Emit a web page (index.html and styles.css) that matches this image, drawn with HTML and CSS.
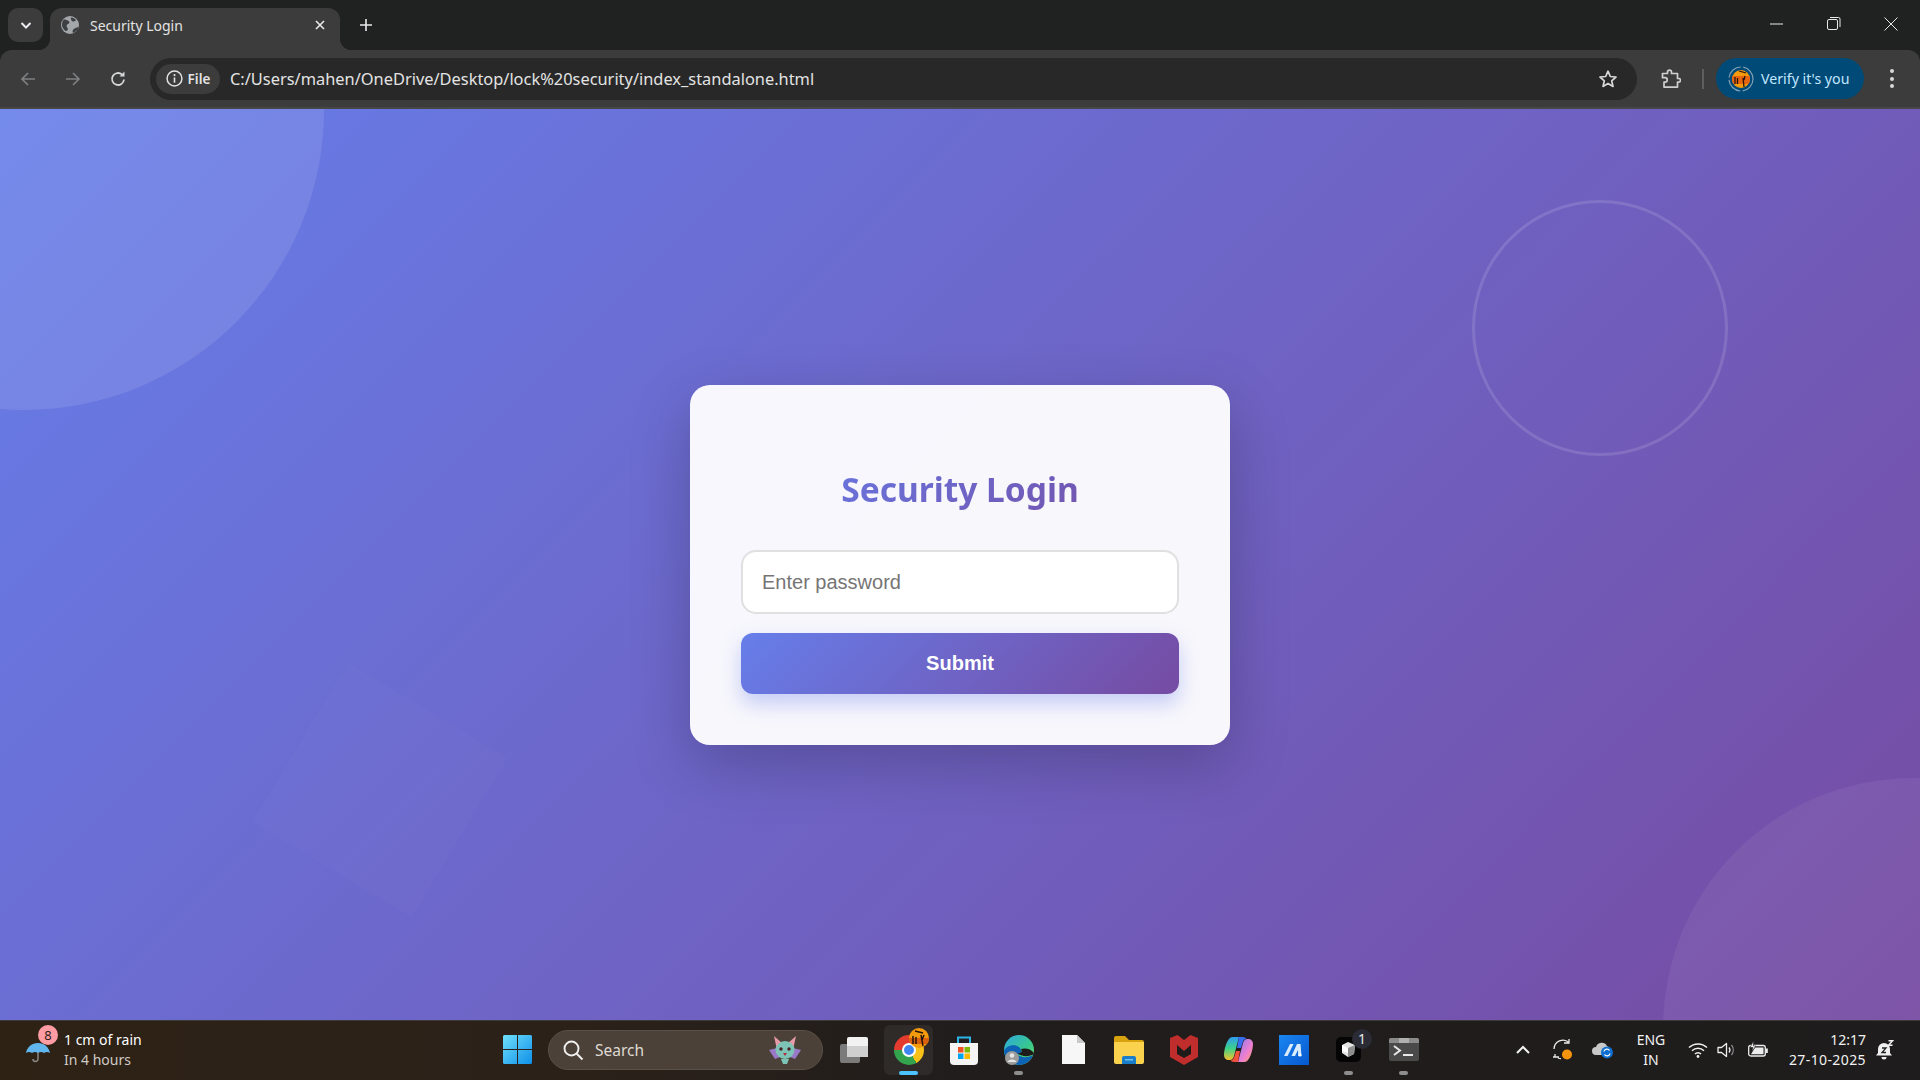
FILE: index.html
```html
<!DOCTYPE html>
<html lang="en">
<head>
    <meta charset="UTF-8">
    <meta name="viewport" content="width=device-width, initial-scale=1.0">
    <title>Security Login</title>
    <link rel="stylesheet" href="styles.css">
</head>
<body>
    <div class="tabstrip">
        <div class="tab-search">
            <svg width="14" height="14" viewBox="0 0 14 14"><path d="M2.5 5l4.500 4.500L11.500 5" fill="none" stroke="#e8eaed" stroke-width="2"/></svg>
        </div>
        <div class="tab">
            <svg width="18" height="18" viewBox="0 0 18 18"><circle cx="9" cy="9" r="9" fill="#a3a7aa"/><path d="M3 3.500c2 0 3 .5 4.500 1.500s1 2.500-.5 3S5 10 6.500 12 5 15.500 4.500 15 1 12 1 9s1-4.500 2-5.500zM12 17c-1-2 0-4 1.500-4.500s3-1.500 4-1C17 14 15 16 12 17zM10 1.500c2 0 4 1 5 2.500-1 1.500-3 2-4 1s-1.500-2.500-1-3.500z" fill="#3d4043"/></svg>
            <span class="tab-title">Security Login</span>
            <svg class="tab-close" width="12" height="12" viewBox="0 0 12 12"><path d="M2 2l8 8M10 2l-8 8" stroke="#e8eaed" stroke-width="1.600"/></svg>
        </div>
        <div class="new-tab">
            <svg width="14" height="14" viewBox="0 0 14 14"><path d="M7 1v12M1 7h12" stroke="#e8eaed" stroke-width="1.600"/></svg>
        </div>
        <div class="window-controls">
            <div class="win-btn"><svg width="14" height="14" viewBox="0 0 14 14"><path d="M0 7h13" stroke="#e8e8e8" stroke-width="1"/></svg></div>
            <div class="win-btn"><svg width="14" height="14" viewBox="0 0 14 14"><rect x=".5" y="2.500" width="10" height="10" rx="1.500" fill="none" stroke="#e8e8e8"/><path d="M3 .5h8.500a1.500 1.500 0 0 1 1.500 1.500v8" fill="none" stroke="#e8e8e8"/></svg></div>
            <div class="win-btn"><svg width="14" height="14" viewBox="0 0 14 14"><path d="M.5.5l13 13M13.500.5l-13 13" stroke="#e8e8e8" stroke-width="1"/></svg></div>
        </div>
    </div>

    <div class="toolbar">
        <div class="nav-btn"><svg width="18" height="18" viewBox="0 0 18 18"><path d="M16 9H3M9 3L3 9l6 6" fill="none" stroke="#7d7f80" stroke-width="1.700"/></svg></div>
        <div class="nav-btn"><svg width="18" height="18" viewBox="0 0 18 18"><path d="M2 9h13M9 3l6 6-6 6" fill="none" stroke="#7d7f80" stroke-width="1.700"/></svg></div>
        <div class="nav-btn"><svg width="18" height="18" viewBox="0 0 18 18"><path d="M15 9.500A6 6 0 1 1 13 4.500" fill="none" stroke="#d5d7d9" stroke-width="1.800"/><path d="M15.500 1.500v5h-5z" fill="#d5d7d9"/></svg></div>
        <div class="omnibox">
            <div class="chip">
                <svg width="17" height="17" viewBox="0 0 16 16"><circle cx="8" cy="8" r="7" fill="none" stroke="#e3e3e3" stroke-width="1.400"/><path d="M8 7v5" stroke="#e3e3e3" stroke-width="1.500"/><circle cx="8" cy="4.800" r="1" fill="#e3e3e3"/></svg>
                <span>File</span>
            </div>
            <span class="url">C:/Users/mahen/OneDrive/Desktop/lock%20security/index_standalone.html</span>
            <svg class="star" width="20" height="20" viewBox="0 0 20 20"><path d="M10 2.200l2.300 5.300 5.700.5-4.300 3.800 1.300 5.600L10 14.500l-5 2.900 1.300-5.600L2 8l5.700-.5z" fill="none" stroke="#d8d8d8" stroke-width="1.700" stroke-linejoin="round"/></svg>
        </div>
        <div class="ext-btn">
            <svg width="20" height="20" viewBox="0 0 20 20"><path d="M1.500 4.500h5V3.200a2 2 0 0 1 4 0v1.300h6v5h1.200a1.800 1.800 0 0 1 0 3.600h-1.200v5H3v-5h1a2.200 2.200 0 0 0 0-4.400H1.500z" fill="none" stroke="#cfcfcf" stroke-width="1.700" stroke-linejoin="round"/></svg>
        </div>
        <div class="toolbar-divider"></div>
        <div class="verify-pill">
            <svg width="26" height="26" viewBox="0 0 26 26">
                <circle cx="13" cy="13" r="12" fill="none" stroke="#7fa0b5" stroke-width="1.200" stroke-dasharray="17 2.500"/>
                <circle cx="13" cy="13" r="9" fill="#f59a0c"/>
                <path d="M4.500 10h17a9 9 0 0 1-1 8h-15a9 9 0 0 1-1-8z" fill="#e8650f"/>
                <path d="M7 11v7M9.500 12v6M15 12l1 9M17 10l-1 4M11 5l7 2" stroke="#26140c" stroke-width="1.300" fill="none"/>
            </svg>
            <span>Verify it's you</span>
        </div>
        <div class="menu-dots"><span></span><span></span><span></span></div>
    </div>

    <main class="page">
        <div class="shape shape-circle-big"></div>
        <div class="shape shape-ring"></div>
        <div class="shape shape-square"></div>
        <div class="shape shape-circle-corner"></div>

        <div class="card">
            <h1 class="card-title">Security Login</h1>
            <input class="password-input" type="password" placeholder="Enter password">
            <button class="submit-btn">Submit</button>
        </div>
    </main>

    <footer class="taskbar">
        <div class="weather">
            <div class="weather-icon">
                <svg width="26" height="24" viewBox="0 0 26 24"><path d="M13 3v15a2.500 2.500 0 0 1-5 0" fill="none" stroke="#8a8a88" stroke-width="1.500"/><path d="M1 12C2 6 7 2 13 2s11 4 12 10c-2-1.500-4-1.500-6 0-2-1.500-4-1.500-6 0-2-1.500-4-1.500-6 0-2-1.500-4-1.500-6 0z" fill="#62b6ee"/></svg>
                <span class="weather-badge">8</span>
            </div>
            <div class="weather-text">
                <div class="weather-main">1 cm of rain</div>
                <div class="weather-sub">In 4 hours</div>
            </div>
        </div>

        <div class="win-logo">
            <svg width="29" height="29" viewBox="0 0 29 29">
                <defs><linearGradient id="winblue" x1="0" y1="0" x2="1" y2="1"><stop offset="0" stop-color="#6fe0fb"/><stop offset="1" stop-color="#0f8fe8"/></linearGradient></defs>
                <path d="M0 1.500A1.500 1.500 0 0 1 1.500 0H14v14H0zM15 0h12.500A1.500 1.500 0 0 1 29 1.500V14H15zM0 15h14v14H1.500A1.500 1.500 0 0 1 0 27.500zM15 15h14v12.500a1.500 1.500 0 0 1-1.500 1.500H15z" fill="url(#winblue)"/>
            </svg>
        </div>

        <div class="search-box">
            <svg width="22" height="22" viewBox="0 0 22 22"><circle cx="9.500" cy="9.500" r="7" fill="none" stroke="#efefef" stroke-width="1.900"/><path d="M14.500 14.500l6 6" stroke="#efefef" stroke-width="2"/></svg>
            <span>Search</span>
            <svg class="search-mascot" width="34" height="30" viewBox="0 0 34 30">
                <path d="M1 15l8-2 3 9-5 2zM33 15l-8-2-3 9 5 2z" fill="#9a78c8"/>
                <path d="M6 1l9 8-6 6zM28 1l-9 8 6 6z" fill="#e99aa8"/>
                <ellipse cx="17" cy="15" rx="9.500" ry="9" fill="#7ec4b6"/>
                <path d="M13 24h8l-2 5h-4z" fill="#7ec4b6"/>
                <circle cx="13" cy="14" r="1.700" fill="#4a1f22"/><circle cx="21" cy="14" r="1.700" fill="#4a1f22"/>
                <path d="M15 18h4l-2 3z" fill="#b0303a"/>
            </svg>
        </div>

        <div class="task-icons">
            <div class="task-item">
                <svg width="28" height="26" viewBox="0 0 28 26"><rect x="0" y="7" width="20" height="19" rx="2" fill="#7b7b7b"/><rect x="7" y="0" width="21" height="20" rx="2" fill="#f2f2f2"/><rect x="7" y="9" width="21" height="11" fill="#cfcfcf"/></svg>
            </div>
            <div class="task-item task-active">
                <div class="chrome-logo"><div class="chrome-dot"></div></div>
                <svg class="chrome-avatar" width="20" height="20" viewBox="0 0 20 20"><circle cx="10" cy="10" r="10" fill="#f39a0d"/><path d="M0 10h20a10 10 0 0 1-2 6H2a10 10 0 0 1-2-6z" fill="#d9600f"/><path d="M4 8v8M7 9v7M12 7l2 11M15 7l-2 5M6 3l8 2" stroke="#26140c" stroke-width="1.500" fill="none"/></svg>
                <span class="task-bar"></span>
            </div>
            <div class="task-item">
                <svg width="30" height="30" viewBox="0 0 30 30">
                    <path d="M9 8V2.500h12V8" fill="none" stroke="#2cb3ea" stroke-width="2"/>
                    <path d="M1 8h28v18a4 4 0 0 1-4 4H5a4 4 0 0 1-4-4z" fill="#f4f4f4"/>
                    <rect x="9" y="12" width="5.500" height="5.500" fill="#f05022"/><rect x="15.500" y="12" width="5.500" height="5.500" fill="#7eb900"/>
                    <rect x="9" y="18.500" width="5.500" height="5.500" fill="#00a3ee"/><rect x="15.500" y="18.500" width="5.500" height="5.500" fill="#fdb800"/>
                </svg>
            </div>
            <div class="task-item">
                <svg width="32" height="32" viewBox="0 0 32 32">
                    <defs><linearGradient id="edge" x1="0" y1="0" x2="1" y2="1"><stop offset="0" stop-color="#2fa8e0"/><stop offset=".6" stop-color="#38c98c"/><stop offset="1" stop-color="#7fdc63"/></linearGradient></defs>
                    <circle cx="16" cy="16" r="15" fill="url(#edge)"/>
                    <path d="M1 17c3-7 14-8 17-1 1 3-2 5-5 4 5 4 12 4 17 1-2 6-8 10-14 10S2 25 1 17z" fill="#0c62b5"/>
                    <path d="M18 15c3-1 9-1 12 3l1 2c-5 3-12 3-17-1 3 1 6-1 4-4z" fill="#1e1b1b"/>
                    <circle cx="9" cy="24" r="7" fill="#9b9b9b"/><circle cx="9" cy="21.500" r="2.300" fill="#e6e6e6"/><path d="M4.500 28c1-3.500 8-3.500 9 0z" fill="#e6e6e6"/>
                </svg>
                <span class="task-dot"></span>
            </div>
            <div class="task-item">
                <svg width="23" height="29" viewBox="0 0 23 29"><path d="M0 0h15l8 8v21H0z" fill="#f7f7f7"/><path d="M15 0v8h8z" fill="#c9c9c9"/></svg>
            </div>
            <div class="task-item">
                <svg width="30" height="28" viewBox="0 0 30 28"><path d="M0 2a2 2 0 0 1 2-2h9l4 4h13a2 2 0 0 1 2 2v3H0z" fill="#d9a20f"/><path d="M0 6h30v20a2 2 0 0 1-2 2H2a2 2 0 0 1-2-2z" fill="#fbd24e"/><path d="M8 22a2 2 0 0 1 2-2h10a2 2 0 0 1 2 2v6H8z" fill="#1a7dc8"/><rect x="11" y="23" width="8" height="1.500" fill="#6cc0f0"/></svg>
            </div>
            <div class="task-item">
                <svg width="28" height="30" viewBox="0 0 28 30"><path d="M0 3l7.500-3L14 5l6.500-5L28 3v19l-14 8-14-8z" fill="#bf2e2c"/><path d="M7 10l7 6 7-6v9l-7 4-7-4z" fill="#1e1b1b"/></svg>
            </div>
            <div class="task-item">
                <svg width="29" height="27" viewBox="0 0 29 27">
                    <defs>
                        <linearGradient id="copA" x1="0" y1="0" x2="0" y2="1"><stop offset="0" stop-color="#2f9bf0"/><stop offset=".5" stop-color="#3dd28a"/><stop offset="1" stop-color="#f6c32c"/></linearGradient>
                        <linearGradient id="copB" x1="0" y1="0" x2="1" y2="1"><stop offset="0" stop-color="#8a7cf0"/><stop offset=".6" stop-color="#ee7fd0"/><stop offset="1" stop-color="#f7a05a"/></linearGradient>
                    </defs>
                    <path d="M9 1h6l-5 19c-.5 2-2 4-4 4H5c-3 0-5-2-5-5 0-6 3-14 5-16 1-1.500 2.500-2 4-2z" fill="url(#copA)"/>
                    <path d="M20 26h-6l5-19c.5-2 2-4 4-4h1c3 0 5 2 5 5 0 6-3 14-5 16-1 1.500-2.500 2-4 2z" fill="url(#copB)"/>
                    <path d="M15 1h4c2 0 3 1 3 2-2 0-3 2-3.500 4L17 12h-4z" fill="#3a6df0"/>
                    <path d="M14 26h-4c-2 0-3-1-3-2 2 0 3-2 3.500-4L12 15h4z" fill="#f0503c"/>
                </svg>
            </div>
            <div class="task-item">
                <svg width="30" height="30" viewBox="0 0 30 30">
                    <defs><linearGradient id="blueapp" x1="0" y1="0" x2="1" y2="1"><stop offset="0" stop-color="#1a86f0"/><stop offset="1" stop-color="#0658cf"/></linearGradient></defs>
                    <rect width="30" height="30" fill="url(#blueapp)"/>
                    <path d="M11 9h3.500L8.500 21H5zM18 9h3.500l1 12H19.200l-.2-6-3 6h-3.500z" fill="#d9ecff"/>
                    <circle cx="21" cy="20" r="1.500" fill="#fff"/>
                </svg>
            </div>
            <div class="task-item">
                <svg width="25" height="25" viewBox="0 0 25 25"><rect width="25" height="25" rx="5" fill="#050505"/><path d="M12 5l7 3-1 9-6 3-6-4V8z" fill="#e5e5e5"/><path d="M12 11l7-3-1 9-6 3z" fill="#8d8d8d"/><path d="M6 8l6 3v5l-6-2z" fill="#fff"/></svg>
                <span class="task-count">1</span>
                <span class="task-dot"></span>
            </div>
            <div class="task-item">
                <svg width="30" height="23" viewBox="0 0 30 23"><rect width="30" height="23" rx="2" fill="#4a4a4a"/><path d="M0 2a2 2 0 0 1 2-2h26a2 2 0 0 1 2 2v3H0z" fill="#8b8b8b"/><rect x="10" y="0" width="10" height="5" fill="#b0b0b0"/><path d="M5 8l6 4.500L5 17" fill="none" stroke="#e8e8e8" stroke-width="2"/><path d="M14 17h10" stroke="#e8e8e8" stroke-width="2"/></svg>
                <span class="task-dot"></span>
            </div>
        </div>

        <div class="tray">
            <div class="tray-item tray-chevron"><svg width="14" height="9" viewBox="0 0 14 9"><path d="M1 8l6-6 6 6" fill="none" stroke="#f2f2f2" stroke-width="2"/></svg></div>
            <div class="tray-item tray-sync"><svg width="22" height="24" viewBox="0 0 22 24"><path d="M2 11a9 9 0 0 1 15-6.500M1 19h6M17 1v4h-5M3 16v3.500M6 20c1 .5 2 .7 3 .7" fill="none" stroke="#eaeaea" stroke-width="1.300"/><circle cx="15" cy="16.500" r="5" fill="#f7940e"/></svg></div>
            <div class="tray-item tray-cloud"><svg width="22" height="18" viewBox="0 0 22 18"><path d="M4 14a4 4 0 0 1 0-8 6 6 0 0 1 11-1 4 4 0 0 1 3 5v4z" fill="#c8c8c8"/><circle cx="15" cy="11.500" r="6" fill="#0f6fd1"/><path d="M12 10.500a3 3 0 0 1 5.500-1M18 12.500a3 3 0 0 1-5.500 1" fill="none" stroke="#fff" stroke-width="1.300"/></svg></div>
            <div class="tray-item tray-lang"><span>ENG</span><span>IN</span></div>
            <div class="tray-item tray-wifi"><svg width="20" height="16" viewBox="0 0 20 16"><path d="M1 5.500a13 13 0 0 1 18 0M4 8.800a8.500 8.500 0 0 1 12 0M7 12a4 4 0 0 1 6 0" fill="none" stroke="#f0f0f0" stroke-width="1.500"/><circle cx="10" cy="14.500" r="1.400" fill="#f0f0f0"/></svg></div>
            <div class="tray-item tray-volume"><svg width="20" height="18" viewBox="0 0 20 18"><path d="M1 6.500h3.500L9.500 2.500v13l-5-4H1z" fill="none" stroke="#ededed" stroke-width="1.300" stroke-linejoin="round"/><path d="M12 6.500a4 4 0 0 1 0 5" fill="none" stroke="#ededed" stroke-width="1.300"/><path d="M14.500 4a8 8 0 0 1 0 10" fill="none" stroke="#8a8a8a" stroke-width="1.300"/></svg></div>
            <div class="tray-item tray-battery"><svg width="20" height="17" viewBox="0 0 20 17"><rect x=".7" y="4.500" width="16.600" height="10.500" rx="2" fill="none" stroke="#ededed" stroke-width="1.300"/><rect x="18" y="7.500" width="1.800" height="4.500" fill="#ededed"/><path d="M7 6.500h8.500v6.800H3z" fill="#ededed"/><path d="M5.500 0L2 6.500h3L3.500 11 8 5H5.500z" fill="#ededed" stroke="#1e1c1c" stroke-width=".6"/></svg></div>
            <div class="tray-item tray-clock"><span>12:17</span><span class="clock-date">27-10-2025</span></div>
            <div class="tray-item tray-bell"><svg width="18" height="20" viewBox="0 0 18 20"><path d="M8 3a6 6 0 0 1 6 6v4l2 2.500H0L2 13V9a6 6 0 0 1 6-6z" fill="#f0f0f0"/><path d="M5.500 17h5a2.500 2.500 0 0 1-5 0z" fill="#f0f0f0"/><path d="M6 8h4l-4 4.500h4" fill="none" stroke="#222" stroke-width="1.300"/><path d="M12.500 .8h4l-4 4.500h4" fill="none" stroke="#f0f0f0" stroke-width="1.400"/></svg></div>
        </div>
    </footer>
</body>
</html>
```

FILE: styles.css
```css
* {
    box-sizing: border-box;
}

body {
    margin: 0;
    height: 100vh;
    display: flex;
    flex-direction: column;
    overflow: hidden;
    background-color: #202221;
    font-family: "Noto Sans", "Open Sans", sans-serif;
}

/* browser tabs */
.tabstrip {
    height: 50px;
    flex: none;
    display: flex;
    align-items: flex-start;
    padding: 8px 1px 0 8px;
    background-color: #202221;
}

.tab-search {
    width: 35px;
    height: 34px;
    display: flex;
    align-items: center;
    justify-content: center;
    background-color: #3c3c3c;
    border-radius: 10px;
}

.tab {
    position: relative;
    width: 290px;
    height: 42px;
    margin-left: 7px;
    padding: 0 14px 8px 11px;
    display: flex;
    align-items: center;
    gap: 11px;
    background-color: #3c3c3c;
    border-radius: 12px 12px 0 0;
}

.tab::before,
.tab::after {
    content: "";
    position: absolute;
    bottom: 0;
    width: 12px;
    height: 12px;
}

.tab::before {
    left: -12px;
    background: radial-gradient(circle at 0 0, transparent 12px, #3c3c3c 12.5px);
}

.tab::after {
    right: -12px;
    background: radial-gradient(circle at 100% 0, transparent 12px, #3c3c3c 12.5px);
}

.tab-title {
    color: #e3e3e3;
    font-size: 14px;
}

.tab-close {
    margin-left: auto;
}

.new-tab {
    margin-left: 19px;
    height: 34px;
    display: flex;
    align-items: center;
}

.window-controls {
    margin-left: auto;
    display: flex;
    margin-top: -4px;
}

.win-btn {
    width: 57px;
    height: 40px;
    display: flex;
    align-items: center;
    justify-content: center;
}

/* address bar row */
.toolbar {
    height: 59px;
    flex: none;
    display: flex;
    align-items: center;
    padding: 0 0 0 5px;
    background-color: #3c3c3c;
    border-bottom: 2px solid #474747;
    border-radius: 12px 12px 0 0;
}

.nav-btn {
    width: 45px;
    display: flex;
    justify-content: center;
}

.omnibox {
    width: 1487px;
    height: 42px;
    margin-left: 10px;
    padding: 0 19px 0 6px;
    display: flex;
    align-items: center;
    background-color: #282828;
    border-radius: 21px;
}

.chip {
    height: 30px;
    width: 64px;
    display: flex;
    align-items: center;
    justify-content: center;
    gap: 5px;
    color: #e3e3e3;
    font-size: 13.5px;
    font-weight: 600;
    background-color: #3c3c3c;
    border-radius: 15px;
}

.url {
    margin-left: 10px;
    color: #e3e3e3;
    font-size: 16.4px;
}

.star {
    margin-left: auto;
}

.ext-btn {
    margin-left: 24px;
    width: 20px;
    height: 20px;
}

.toolbar-divider {
    width: 2px;
    height: 20px;
    margin-left: 21px;
    background-color: #5f5f5f;
}

.verify-pill {
    width: 148px;
    height: 41px;
    margin-left: 12px;
    padding-left: 12px;
    display: flex;
    align-items: center;
    gap: 7px;
    color: #c2e7ff;
    font-size: 14.2px;
    white-space: nowrap;
    background-color: #004a77;
    border-radius: 21px;
}

.menu-dots {
    margin-left: 26px;
    display: flex;
    flex-direction: column;
    gap: 3.5px;
}

.menu-dots span {
    width: 4px;
    height: 4px;
    border-radius: 50%;
    background-color: #d8d8d8;
}

/* page content */
.page {
    position: relative;
    flex: 1;
    padding-top: 1px;
    display: flex;
    align-items: center;
    justify-content: center;
    overflow: hidden;
    background: linear-gradient(135deg, #667eea 0%, #764ba2 100%);
}

.shape {
    position: absolute;
}

.shape-circle-big {
    width: 600px;
    height: 600px;
    left: -276px;
    top: -299px;
    border-radius: 50%;
    background-color: rgba(255, 255, 255, 0.1);
}

.shape-ring {
    width: 256px;
    height: 256px;
    left: 1472px;
    top: 91px;
    border: 3px solid rgba(255, 255, 255, 0.13);
    border-radius: 50%;
}

.shape-square {
    width: 186px;
    height: 186px;
    left: 287px;
    top: 588px;
    transform: rotate(31deg);
    background-color: rgba(255, 255, 255, 0.015);
}

.shape-circle-corner {
    width: 500px;
    height: 500px;
    left: 1663px;
    top: 669px;
    border-radius: 50%;
    background-color: rgba(255, 255, 255, 0.06);
}

.card {
    position: relative;
    width: 540px;
    padding: 81px 51px 51px;
    display: flex;
    flex-direction: column;
    background-color: rgba(255, 255, 255, 0.95);
    border-radius: 20px;
    box-shadow: 0 20px 60px rgba(0, 0, 0, 0.22);
}

.card-title {
    margin: 0 0 37px;
    height: 47px;
    line-height: 47px;
    text-align: center;
    font-size: 33.5px;
    font-weight: 700;
    background: linear-gradient(135deg, #667eea, #764ba2);
    -webkit-background-clip: text;
    background-clip: text;
    color: transparent;
}

.password-input {
    width: 100%;
    height: 64px;
    padding: 0 19px;
    font-family: "Liberation Sans", Arial, sans-serif;
    font-size: 20px;
    background-color: #fff;
    border: 2px solid #e0e0e0;
    border-radius: 15px;
    outline: none;
}

.password-input::placeholder {
    color: #757575;
}

.submit-btn {
    width: 100%;
    height: 61px;
    margin-top: 19px;
    color: #fff;
    font-family: "Liberation Sans", Arial, sans-serif;
    font-size: 20px;
    font-weight: 700;
    background: linear-gradient(135deg, #667eea 0%, #764ba2 100%);
    border: none;
    border-radius: 12px;
    box-shadow: 0 10px 20px rgba(102, 126, 234, 0.35);
}

/* windows taskbar */
.taskbar {
    height: 60px;
    flex: none;
    padding-bottom: 2px;
    display: flex;
    align-items: center;
    background: linear-gradient(90deg, #2e2215 0%, #2b2119 30%, #211d1c 50%, #1e1c1c 100%);
    border-top: 1px solid #3d3a3c;
}

.weather {
    width: 503px;
    flex: none;
    padding-left: 25px;
    display: flex;
    align-items: center;
    color: #fff;
}

.weather-icon {
    position: relative;
    width: 39px;
    height: 24px;
    margin-top: 6px;
}

.weather-badge {
    position: absolute;
    left: 13px;
    top: -16px;
    width: 20px;
    height: 20px;
    line-height: 20px;
    text-align: center;
    color: #2b1c16;
    font-size: 13px;
    background-color: #ff9ca3;
    border-radius: 50%;
}

.weather-main {
    font-size: 14px;
    line-height: 20px;
}

.weather-sub {
    font-size: 14px;
    line-height: 20px;
    color: #cfcac5;
}

.win-logo {
    width: 29px;
    height: 29px;
    flex: none;
}

.search-box {
    width: 275px;
    height: 40px;
    flex: none;
    margin-left: 16px;
    padding: 0 20px 0 13px;
    display: flex;
    align-items: center;
    gap: 11px;
    color: #dfd9d3;
    font-size: 15.5px;
    background-color: #4b4138;
    border: 1px solid #5a5047;
    border-radius: 20px;
}

.search-mascot {
    margin-left: auto;
    margin-right: 0;
}

.task-icons {
    margin-left: 3px;
    display: flex;
    flex: none;
}

.task-item {
    position: relative;
    width: 55px;
    height: 50px;
    display: flex;
    align-items: center;
    justify-content: center;
}

.task-active::before {
    content: "";
    position: absolute;
    left: 3px;
    right: 3px;
    top: 0;
    bottom: 0;
    background-color: rgba(255, 255, 255, 0.06);
    border-radius: 6px;
}

.chrome-logo {
    position: relative;
    width: 30px;
    height: 30px;
    display: flex;
    align-items: center;
    justify-content: center;
    border-radius: 50%;
    background: conic-gradient(#e33b2e 0 30deg, #f7c11a 30deg 150deg, #34a34e 150deg 270deg, #e33b2e 270deg);
}

.chrome-dot {
    width: 14px;
    height: 14px;
    background-color: #3f86f0;
    border: 2.5px solid #fff;
    border-radius: 50%;
}

.chrome-avatar {
    position: absolute;
    left: 28px;
    top: 3px;
}

.task-bar {
    position: absolute;
    left: 18px;
    bottom: 0;
    width: 19px;
    height: 4px;
    background-color: #4cc2ff;
    border-radius: 2px;
}

.task-dot {
    position: absolute;
    left: 23px;
    bottom: 0;
    width: 9px;
    height: 4px;
    background-color: #8e8e8e;
    border-radius: 2px;
}

.task-count {
    position: absolute;
    left: 31px;
    top: 4px;
    width: 20px;
    height: 20px;
    line-height: 20px;
    text-align: center;
    color: #e8e8e8;
    font-size: 14px;
    background-color: #2b2b36;
    border-radius: 50%;
}

.tray {
    margin-left: auto;
    padding-right: 20px;
    display: flex;
    align-items: center;
    color: #f2f2f2;
}

.tray-item {
    display: flex;
    align-items: center;
    justify-content: center;
}

.tray-chevron,
.tray-sync,
.tray-cloud {
    width: 40px;
}

.tray-lang {
    width: 56px;
    flex-direction: column;
    font-size: 14px;
    line-height: 20px;
}

.tray-wifi {
    width: 38px;
}

.tray-volume {
    width: 20px;
}

.tray-battery {
    width: 42px;
}

.tray-clock {
    width: 91px;
    padding-right: 4px;
    flex-direction: column;
    align-items: flex-end;
    font-size: 14px;
    line-height: 20px;
}

.clock-date {
    letter-spacing: 0.4px;
    white-space: nowrap;
}

.tray-bell {
    width: 30px;
}
```
